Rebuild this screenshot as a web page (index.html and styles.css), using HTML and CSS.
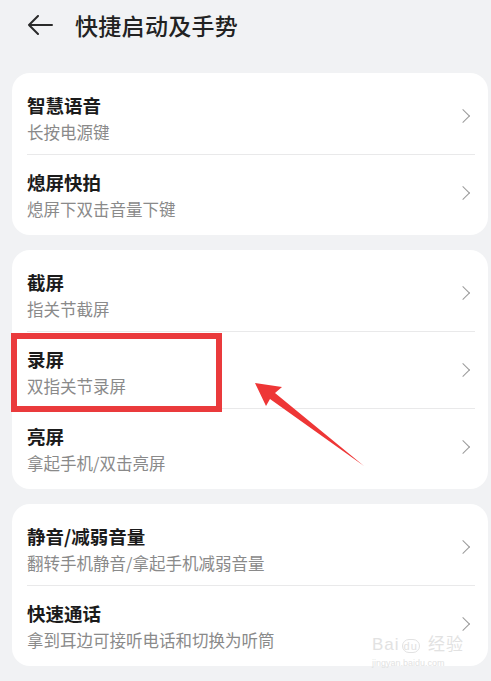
FILE: index.html
```html
<!DOCTYPE html>
<html lang="zh-CN">
<head>
<meta charset="utf-8">
<link rel="stylesheet" href="styles.css">
</head>
<body>
<div class="page">
  <header class="topbar">
    <svg class="back" width="26" height="20" viewBox="0 0 26 20"><path d="M25 10H2M11 1L2 10l9 9" fill="none" stroke="#2a2a2a" stroke-width="2" stroke-linecap="round" stroke-linejoin="round"/></svg>
    <h1 class="title">快捷启动及手势</h1>
  </header>

  <section class="card">
    <div class="row"><div class="txt"><div class="t">智慧语音</div><div class="s">长按电源键</div></div><span class="chev"></span></div>
    <div class="row"><div class="txt"><div class="t">熄屏快拍</div><div class="s">熄屏下双击音量下键</div></div><span class="chev"></span></div>
  </section>

  <section class="card">
    <div class="row"><div class="txt"><div class="t">截屏</div><div class="s">指关节截屏</div></div><span class="chev"></span></div>
    <div class="row"><div class="txt"><div class="t">录屏</div><div class="s">双指关节录屏</div></div><span class="chev"></span></div>
    <div class="row"><div class="txt"><div class="t">亮屏</div><div class="s">拿起手机/双击亮屏</div></div><span class="chev"></span></div>
  </section>

  <section class="card">
    <div class="row"><div class="txt"><div class="t">静音/减弱音量</div><div class="s">翻转手机静音/拿起手机减弱音量</div></div><span class="chev"></span></div>
    <div class="row"><div class="txt"><div class="t">快速通话</div><div class="s">拿到耳边可接听电话和切换为听筒</div></div><span class="chev"></span></div>
  </section>

  <div class="highlight"></div>
  <svg class="pointer" width="491" height="681" viewBox="0 0 491 681">
    <path d="M255 383 L282 387 L275 393 L364 466 L270 399 L266 406 Z" fill="#ee3636"/>
  </svg>
  <div class="watermark"><span class="wm1">Bai<span class="paw">du</span> 经验</span><span class="wm2">jingyan.baidu.com</span></div>
</div>
</body>
</html>
```

FILE: styles.css
```css
* { box-sizing: border-box; }
html, body { margin: 0; padding: 0; }
body {
  background: #f1f2f4;
  font-family: "Noto Sans CJK SC", "Noto Sans", sans-serif;
  width: 491px;
  height: 681px;
  overflow: hidden;
}
.page {
  position: relative;
  width: 491px;
  height: 681px;
  padding: 0 3px 0 12px;
}
.topbar {
  height: 73px;
  display: flex;
  align-items: flex-start;
  padding-top: 9px;
}
.back {
  margin-left: 15px;
  margin-top: 6px;
  flex: none;
}
.title {
  margin: 0 0 0 22px;
  font-size: 23px;
  line-height: 32px;
  font-weight: 500;
  color: #222;
  letter-spacing: 0.3px;
}
.card {
  background: #fff;
  border-radius: 18px;
  padding: 4px 0;
  margin-bottom: 15px;
}
.row {
  height: 77px;
  padding: 4px 16px 0 15px;
  display: flex;
  align-items: center;
  justify-content: space-between;
  position: relative;
}
.row + .row::before {
  content: "";
  position: absolute;
  left: 15px;
  right: 13px;
  top: 0;
  height: 1px;
  background: #e9e9ea;
}
.txt { display: flex; flex-direction: column; gap: 2px; }
.t {
  font-size: 18.5px;
  line-height: 26px;
  font-weight: 700;
  color: #1b1b1b;
}
.s {
  font-size: 16.5px;
  line-height: 24px;
  color: #8a8a8a;
}
.chev {
  width: 10px;
  height: 10px;
  border-top: 1.6px solid #9a9a9a;
  border-right: 1.6px solid #9a9a9a;
  transform: rotate(45deg);
  margin-right: 4px;
  margin-top: -4px;
}
.highlight {
  position: absolute;
  left: 11px;
  top: 333px;
  width: 211px;
  height: 79px;
  border: 6px solid #ea3a3c;
}
.pointer {
  position: absolute;
  left: 0;
  top: 0;
  pointer-events: none;
}
.watermark {
  position: absolute;
  left: 372px;
  top: 636px;
  display: flex;
  flex-direction: column;
  align-items: flex-start;
  color: #e2e2e2;
  font-family: "Liberation Sans", sans-serif;
}
.wm1 { font-size: 17px; line-height: 18px; letter-spacing: 1px; }
.paw { border-radius: 8px; border: 1px solid #e2e2e2; font-size: 11px; padding: 0 1px; margin: 0 2px; }
.wm2 { font-size: 9px; line-height: 12px; margin-top: 2px; }
```
